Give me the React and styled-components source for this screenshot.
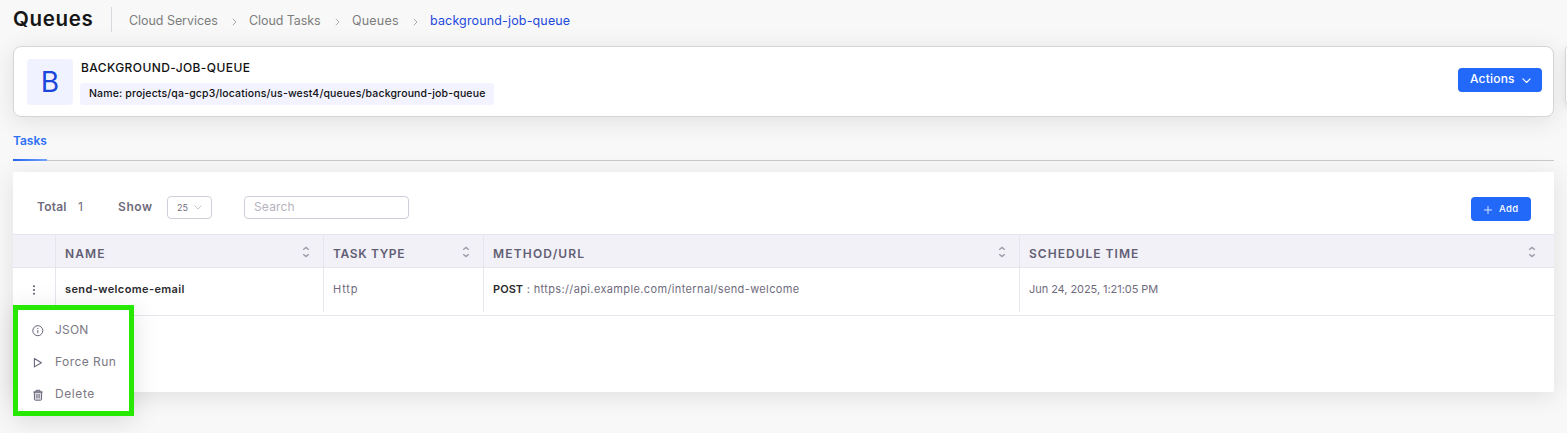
import React from 'react';
import styled, { createGlobalStyle, css } from 'styled-components';

const GlobalStyle = createGlobalStyle`
  *, *::before, *::after { box-sizing: border-box; }
  body {
    margin: 0;
    background: #f8f8f8;
    font-family: Inter, "Open Sans", sans-serif;
    font-size: 12px;
    color: #6f6b7d;
    overflow: hidden;
  }
  button, input { font-family: inherit; margin: 0; }
`;

const Page = styled.main`
  position: relative;
  height: 433px;
  padding: 0 13px;
  overflow: hidden;
`;

const Header = styled.header`
  display: flex;
  align-items: center;
  height: 39px;
`;

const Title = styled.h1`
  width: 98px;
  margin: 0;
  padding-bottom: 1px;
  font-size: 20.5px;
  line-height: 24px;
  font-weight: 600;
  letter-spacing: 0.65px;
  color: #151515;
`;

const Divider = styled.i`
  width: 1px;
  height: 25px;
  background: #d8d8de;
`;

const Crumbs = styled.nav`
  display: flex;
  align-items: center;
  padding: 2px 0 0 17px;
  font-size: 12.5px;
  line-height: 16px;
`;

const Crumb = styled.a`
  width: ${(p) => p.$width}px;
  white-space: nowrap;
  letter-spacing: ${(p) => p.$spacing || 0}px;
  color: ${(p) => (p.$current ? '#1f49dc' : '#7d7d7d')};
`;

const CrumbArrow = styled.svg`
  width: 5px;
  height: 8px;
  margin: 2px 12px 0 14px;
  flex: none;
`;

const Card = styled.section`
  display: flex;
  align-items: flex-start;
  width: 1541px;
  height: 71px;
  margin-top: 7px;
  padding: 12px 11px 0 13px;
  background: #fff;
  border: 1px solid #d5d5d6;
  border-radius: 8px;
  box-shadow: 0 4px 24px rgba(0, 0, 0, 0.1);
`;

const Initial = styled.div`
  width: 46px;
  height: 46px;
  border-radius: 4px;
  background: #f1f2ff;
  color: #1b45dc;
  font-size: 28px;
  line-height: 46px;
  text-align: center;
`;

const CardInfo = styled.div`
  flex: 1;
  padding-left: 7px;
`;

const CardName = styled.div`
  height: 24px;
  padding-left: 1px;
  font-size: 12px;
  line-height: 18px;
  font-weight: 500;
  letter-spacing: 0.41px;
  color: #111;
`;

const Chip = styled.div`
  width: 414px;
  height: 22px;
  padding-left: 9px;
  border-radius: 3px;
  background: #f2f3ff;
  font-size: 10.5px;
  line-height: 21px;
  font-weight: 500;
  letter-spacing: 0.16px;
  white-space: nowrap;
  color: #111;
`;

const PrimaryButton = styled.button`
  display: flex;
  align-items: center;
  height: 24px;
  padding: 0;
  border: 0;
  border-radius: 4px;
  background: #2269fa;
  color: #fff;
  line-height: 22px;
  font-weight: 500;
`;

const ActionsButton = styled(PrimaryButton)`
  width: 84px;
  margin-top: 9px;
  padding: 0 11px 0 12px;
  justify-content: space-between;
  font-size: 12px;
  letter-spacing: 0.2px;
  span { padding-bottom: 2px; }
  svg { margin-top: 1px; }
`;

const SidePanelEdge = styled.aside`
  position: absolute;
  left: 1565px;
  top: 46px;
  width: 20px;
  height: 59px;
  border: 1px solid #d5d5d6;
  border-radius: 4px;
  background: #fff;
  box-shadow: 0 3px 8px rgba(0, 0, 0, 0.1);
`;

const Tabs = styled.div`
  width: 1541px;
  height: 44px;
  border-bottom: 1px solid #c9c9cc;
`;

const Tab = styled.div`
  width: 34px;
  height: 44px;
  padding-top: 15px;
  font-weight: 600;
  font-size: 12px;
  line-height: 18px;
  letter-spacing: -0.05px;
  color: #2d70f5;
  background: linear-gradient(90deg, #1e63f5, #78a5fb) left bottom / 100% 2px no-repeat;
`;

const Panel = styled.section`
  width: 1541px;
  height: 220px;
  margin-top: 11px;
  border-radius: 2px;
  background: #fff;
  box-shadow: 0 4px 24px rgba(0, 0, 0, 0.1);
`;

const Toolbar = styled.div`
  display: flex;
  align-items: center;
  height: 62px;
  padding: 8px 23px 0 24px;
`;

const ToolLabel = styled.span`
  width: ${(p) => p.$width}px;
  padding-bottom: 1px;
  font-weight: 600;
  letter-spacing: ${(p) => p.$spacing}px;
`;

const Count = styled.span`
  width: 40px;
  padding-bottom: 1px;
`;

const Select = styled.div`
  display: flex;
  align-items: center;
  justify-content: space-between;
  width: 45px;
  height: 23px;
  margin-right: 32px;
  padding: 1px 9px 0 9px;
  border: 1px solid #d0ced9;
  border-radius: 4px;
  font-size: 9px;
`;

const SearchInput = styled.input`
  width: 165px;
  height: 23px;
  padding: 0 9px 2px;
  border: 1px solid #cfcdda;
  border-radius: 4px;
  outline: 0;
  background: #fff;
  font-size: 12px;
  letter-spacing: 0.16px;
  &::placeholder { color: #b5b3be; opacity: 1; }
`;

const AddButton = styled(PrimaryButton)`
  width: 60px;
  margin: 3px 0 0 auto;
  padding-left: 13px;
  gap: 7px;
  font-size: 9.5px;
  font-weight: 500;
  letter-spacing: 0.3px;
  svg { margin-top: 2px; }
`;

const rowGrid = css`
  display: grid;
  grid-template-columns: 42px 268px 160px 536px 1fr;
`;

const HeadRow = styled.div`
  ${rowGrid}
  height: 34px;
  border: solid #e6e5ee;
  border-width: 1px 0;
  background: #f2f1f7;
`;

const BodyRow = styled.div`
  ${rowGrid}
  height: 48px;
  border-bottom: 1px solid #e6e5ee;
`;

const HeadCell = styled.div`
  display: flex;
  align-items: center;
  justify-content: space-between;
  padding: 5px 13px 0 9px;
  font-weight: 600;
  font-size: 12px;
  letter-spacing: ${(p) => p.$spacing}px;
  color: #625e74;
  border-left: 1px solid #e6e5ee;
  svg { margin-bottom: 3px; }
  &:last-child { padding-right: 18px; }
`;

const Cell = styled.div`
  height: 44px;
  padding-left: 9px;
  border-left: 1px solid #e6e5ee;
  font-size: 11px;
  line-height: 43px;
  white-space: nowrap;
  letter-spacing: ${(p) => p.$spacing || 0}px;
`;

const Strong = styled.span`
  font-weight: 600;
  color: #2b2b2f;
  letter-spacing: ${(p) => p.$spacing}px;
`;

const KebabCell = styled.div`
  display: flex;
  align-items: flex-start;
  padding: 17px 0 0 19px;
`;

const Menu = styled.ul`
  position: absolute;
  left: 13px;
  top: 305px;
  width: 121px;
  height: 111px;
  margin: 0;
  padding: 4px 0 0 14px;
  list-style: none;
  background: #fff;
  border: 5px solid #27e900;
  box-shadow: 0 5px 25px rgba(0, 0, 0, 0.12);
`;

const MenuItem = styled.li`
  display: flex;
  align-items: center;
  height: 32px;
  font-size: 12px;
  line-height: 30px;
  letter-spacing: ${(p) => p.$spacing}px;
  color: #7b7883;
  svg { margin: 2px 11px 0 0; flex: none; }
`;

const Chevron = ({ color, width = 9, stroke = 1.3 }) => (
  <svg width={width} height={width * 0.6} viewBox="0 0 10 6" fill="none" stroke={color} strokeWidth={stroke} strokeLinecap="round" strokeLinejoin="round">
    <path d="M1 1l4 4 4-4" />
  </svg>
);

const Sort = () => (
  <svg width="8" height="12" viewBox="0 0 8 12" fill="none" stroke="#a09dac" strokeWidth="1.5">
    <path d="M1.2 3.8L4 1.4l2.8 2.4M1.2 8.2L4 10.6l2.8-2.4" />
  </svg>
);

const Arrow = () => (
  <CrumbArrow viewBox="0 0 5 8" fill="none" stroke="#aaa" strokeWidth="1">
    <path d="M.8.8L4 4 .8 7.2" />
  </CrumbArrow>
);

const InfoIcon = () => (
  <svg width="12" height="12" viewBox="0 0 12 12" fill="none" stroke="#68647a">
    <circle cx="5.8" cy="5.7" r="5" />
    <path d="M5.8 5v3.2M5.8 3v1" />
  </svg>
);

const PlayIcon = () => (
  <svg width="12" height="12" viewBox="0 0 12 12" fill="none" stroke="#68647a" strokeWidth="1.1" strokeLinejoin="round">
    <path d="M2.4 1.5v8.4L9.4 5.7z" />
  </svg>
);

const TrashIcon = () => (
  <svg width="12" height="12" viewBox="0 0 12 12" fill="none" stroke="#68647a" strokeWidth="1">
    <path d="M2.4 3h7.2v7.2q0 1-1 1H3.4q-1 0-1-1z" fill="#dddce2" />
    <path d="M1.3 3h9.4M4 3V1.3h4V3M4.9 5v4.3M7.1 5v4.3" />
  </svg>
);

const columns = [
  ['NAME', 1.1],
  ['TASK TYPE', 0.64],
  ['METHOD/URL', 1.17],
  ['SCHEDULE TIME', 1.02],
];

export default function App() {
  return (
    <Page>
      <GlobalStyle />
      <Header>
        <Title>Queues</Title>
        <Divider />
        <Crumbs>
          <Crumb $width={89} $spacing={-0.05}>Cloud Services</Crumb>
          <Arrow />
          <Crumb $width={72} $spacing={-0.08}>Cloud Tasks</Crumb>
          <Arrow />
          <Crumb $width={47} $spacing={0.2}>Queues</Crumb>
          <Arrow />
          <Crumb $width={142} $spacing={0.15} $current>background-job-queue</Crumb>
        </Crumbs>
      </Header>

      <Card>
        <Initial>B</Initial>
        <CardInfo>
          <CardName>BACKGROUND-JOB-QUEUE</CardName>
          <Chip>Name: projects/qa-gcp3/locations/us-west4/queues/background-job-queue</Chip>
        </CardInfo>
        <ActionsButton>
          <span>Actions</span>
          <Chevron color="#fff" />
        </ActionsButton>
      </Card>
      <SidePanelEdge />

      <Tabs>
        <Tab>Tasks</Tab>
      </Tabs>

      <Panel>
        <Toolbar>
          <ToolLabel $width={41} $spacing={0.2}>Total</ToolLabel>
          <Count>1</Count>
          <ToolLabel $width={49} $spacing={0.6}>Show</ToolLabel>
          <Select>
            25
            <Chevron color="#b8b6c0" width={8} stroke={1} />
          </Select>
          <SearchInput placeholder="Search" />
          <AddButton>
            <svg width="8" height="8" viewBox="0 0 8 8" stroke="#d5e2ff" strokeWidth="1">
              <path d="M0 4h8M4 0v8" />
            </svg>
            Add
          </AddButton>
        </Toolbar>
        <HeadRow>
          <div />
          {columns.map(([label, spacing]) => (
            <HeadCell key={label} $spacing={spacing}>
              {label}
              <Sort />
            </HeadCell>
          ))}
        </HeadRow>
        <BodyRow>
          <KebabCell>
            <svg width="4" height="10" viewBox="0 0 4 10" fill="#5f5b6e">
              <circle cx="2" cy="1.2" r="1" />
              <circle cx="2" cy="5" r="1" />
              <circle cx="2" cy="8.8" r="1" />
            </svg>
          </KebabCell>
          <Cell><Strong $spacing={0.39}>send-welcome-email</Strong></Cell>
          <Cell $spacing={0.8}>Http</Cell>
          <Cell $spacing={0.37}><Strong $spacing={0.05}>POST</Strong> : https://api.example.com/internal/send-welcome</Cell>
          <Cell $spacing={-0.06}>Jun 24, 2025, 1:21:05 PM</Cell>
        </BodyRow>
      </Panel>

      <Menu>
        <MenuItem $spacing={0.2}><InfoIcon />JSON</MenuItem>
        <MenuItem $spacing={0.45}><PlayIcon />Force Run</MenuItem>
        <MenuItem $spacing={0.6}><TrashIcon />Delete</MenuItem>
      </Menu>
    </Page>
  );
}
